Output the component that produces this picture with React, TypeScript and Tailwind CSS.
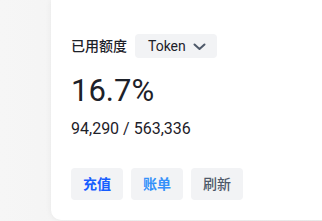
import React from "react";

const font = { fontFamily: 'Roboto, "Noto Sans CJK SC", sans-serif' };

export default function App() {
  return (
    <div
      className="w-[322px] h-[221px] overflow-hidden flex bg-[#f5f5f5] bg-gradient-to-r from-[#f6f6f6] to-[#eeeeee]"
      style={font}
    >
      <div className="ml-[51px] w-[300px] h-[220px] shrink-0 bg-white rounded-bl-[10px] shadow-[0_0_6px_rgba(0,0,0,0.06)] pl-5 pt-[34px] flex flex-col">
        <div className="flex items-center gap-2 h-6">
          <span className="text-[14px] font-medium text-[#1d2129] leading-none">已用额度</span>
          <button className="h-6 w-[82px] rounded bg-[#f2f3f5] flex items-center pl-[13px] pr-[11px] text-[14px] text-[#1d2129]">
            <span>Token</span>
            <svg width="13" height="13" viewBox="0 0 13 13" fill="none" className="ml-auto">
              <path d="M1.5 4.5l5 4.5 5-4.5" stroke="#4e5969" strokeWidth="2" strokeLinecap="round" strokeLinejoin="round" />
            </svg>
          </button>
        </div>
        <div className="mt-[13px] text-[31px] leading-[40px] font-normal text-[#1d2129]">16.7%</div>
        <div className="mt-2 text-[16px] leading-[20px] text-[#1d2129]">94,290 / 563,336</div>
        <div className="mt-[29px] flex gap-2">
          <button className="h-8 w-[52px] rounded bg-[#f2f3f5] text-[14px] font-semibold text-[#165dff]">充值</button>
          <button className="h-8 w-[52px] rounded bg-[#f2f3f5] text-[14px] font-semibold text-[#3491fa]">账单</button>
          <button className="h-8 w-[52px] rounded bg-[#f2f3f5] text-[14px] font-medium text-[#4e5969]">刷新</button>
        </div>
      </div>
    </div>
  );
}
